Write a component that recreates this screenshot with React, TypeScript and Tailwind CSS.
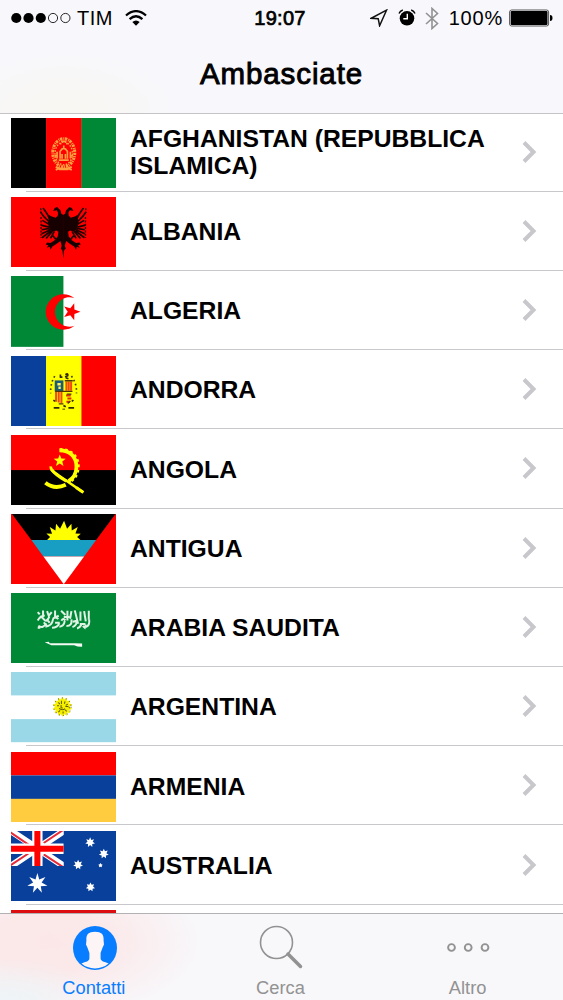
import React from "react";

// Points of a star polygon centred on cx, cy
const star = (cx: number, cy: number, r: number, inner: number, n: number, turn = -90) =>
  Array.from({ length: n * 2 }, (_, i) => {
    const a = ((turn + (i * 180) / n) * Math.PI) / 180;
    const d = i % 2 ? inner : r;
    return `${(cx + d * Math.cos(a)).toFixed(1)},${(cy + d * Math.sin(a)).toFixed(1)}`;
  }).join(" ");

type FlagProps = { children?: React.ReactNode };

const Flag = ({ children }: FlagProps) => (
  <svg
    viewBox="0 0 316 210"
    preserveAspectRatio="none"
    className="block h-[70.2px] w-[105.5px] shrink-0"
  >
    {children}
  </svg>
);

const Afghanistan = () => (
  <Flag>
    <rect width="106" height="210" fill="#000" />
    <rect x="105" width="107" height="210" fill="#fe0000" />
    <rect x="211" width="105" height="210" fill="#008837" />
    <g fill="none" stroke="#ffa040">
      <ellipse cx="158" cy="104" rx="33" ry="42" strokeWidth="9" strokeDasharray="7 3 3 2" />
      <ellipse cx="158" cy="106" rx="26" ry="34" strokeWidth="4" strokeDasharray="5 4" />
      <path d="M134 146q24 12 48 0M134 155l12-5M182 155l-12-5M144 153h28" strokeWidth="6" />
      <path d="M138 101v20M178 101v20M147 122v-22q11-18 22 0v22M158 90v-8M143 126h30M150 70h16M146 77h5M165 77h5" strokeWidth="5" />
      <path d="M153 108v14M163 108v14M130 113h8M178 113h8" strokeWidth="5" />
    </g>
  </Flag>
);

// Left half of the eagle, mirrored for the right one
const EagleHalf = () => (
  <>
    <path
      d="M157 54L151 50L148 40L138 30L131 33L126 42L137 40L141 47L140 56L134 62L122 58L111 52L113 66L110 76L113 88L117 98L124 104L136 100L142 104L140 118L130 130L118 138L108 136L104 142L112 144L107 152L116 149L118 158L124 148L138 139L148 132L152 146L149 154L154 160L157 184z"
      fill="#160000"
    />
    <path
      d="M96 33L108 50L116 66M88 44L98 58L114 74M94 70L114 82M90 84L114 90M92 98L116 94M92 110L118 98M93 122L120 101M105 124L124 102M118 124L130 103M122 112L134 126"
      fill="none"
      stroke="#1c0000"
      strokeWidth="5"
    />
    <path d="M89 34v14M90 60v62" stroke="#300000" strokeWidth="4" strokeDasharray="6 4" />
  </>
);

const Albania = () => (
  <Flag>
    <rect width="316" height="210" fill="#fe0000" />
    <EagleHalf />
    <g transform="translate(313 0) scale(-1 1)">
      <EagleHalf />
    </g>
  </Flag>
);

const Algeria = () => (
  <Flag>
    <rect width="316" height="210" fill="#fff" />
    <rect width="157" height="212" fill="#008837" />
    <path d="M190 66A53 53 0 1 0 190 149A44 44 0 1 1 190 66z" fill="#fe0000" />
    <polygon points={star(181, 107, 27, 11, 5, 0)} fill="#fe0000" />
  </Flag>
);

const Andorra = () => (
  <Flag>
    <rect width="106" height="210" fill="#08409c" />
    <rect x="105" width="107" height="210" fill="#ff0" />
    <rect x="211" width="105" height="210" fill="#fe0000" />
    <rect x="131" y="73" width="26" height="33" fill="#1b5b74" />
    <path d="M139 81h10v7h-10zM142 91h7v8h-7z" fill="#fff36b" />
    <path d="M135 107v30M143 107v32M151 107v34M166 76v28M173 76v28M180 76v28" stroke="#f04a10" strokeWidth="6" />
    <path d="M165 118h14M169 127h12M166 137h10" stroke="#e02c10" strokeWidth="6" />
    <path d="M132 106h52M161 74h24M167 114h14M170 142l8-7M143 143h14" stroke="#503400" strokeWidth="4" />
    <path d="M146 63h8M148 55v9M163 56q9-6 7 3l-8 4M164 65l8 3M127 132l5 4M187 132l-5 4M128 155h17M172 155h17M157 148l7 4" stroke="#302800" strokeWidth="5" fill="none" />
    <path d="M131 60q-14 24-12 52M181 60q17 24 15 52" stroke="#484000" strokeWidth="5" strokeDasharray="5 8" fill="none" />
    <path d="M154 159h8" stroke="#484000" strokeWidth="3" />
  </Flag>
);

const Angola = () => (
  <Flag>
    <rect width="316" height="210" fill="#fe0000" />
    <rect y="105" width="316" height="105" fill="#000" />
    <polygon points={star(146, 77, 19, 8, 5)} fill="#ff0" />
    <g fill="none" stroke="#ff0">
      <path d="M145 46C176 46 197 65 196 97C195 118 187 130 172 138" strokeWidth="11" />
      <path d="M146 43C180 40 206 66 202 99C200 121 190 133 177 140" strokeWidth="7" strokeDasharray="8 8" />
      <path d="M103 143C122 158 143 159 164 149" strokeWidth="12" />
      <path d="M119 94Q118 106 140 119L217 172" strokeWidth="8" />
      <path d="M121 103Q134 121 166 138M195 157l21 14" strokeWidth="9" />
    </g>
  </Flag>
);

const Antigua = () => (
  <Flag>
    <rect width="316" height="210" fill="#fe0000" />
    <path d="M3 0H313L255 78H61z" fill="#000" />
    <path d="M61 78H255L219 127H97z" fill="#189dc3" />
    <path d="M97 127H219L158 210z" fill="#fff" />
    <path
      d="M108 78l9-9-11-11 17 1-7-20 17 10 2-20 12 15 12-24 9 24 13-15 1 20 18-10-7 19 16 1-11 10 10 9z"
      fill="#ff0"
    />
  </Flag>
);

const SaudiArabia = () => (
  <Flag>
    <rect width="316" height="210" fill="#008837" />
    <g fill="none" stroke="#dff2e4" strokeWidth="6">
      <path d="M80 57l6 7M96 52v20M108 54l5 14 9-11M132 52v21l11-5M150 53l13 13M169 53v29M181 54l-4 23M191 52l10 40M208 55v28M219 54l5 31M233 53v27" />
      <path d="M80 82q9-17 18-4t17-8M82 98q15 10 23-8M103 101q20-3 22-19t17-4M116 89l-10-11M123 104q16 0 22-14M145 101q14-1 16-18M151 83q5-10 12-2M166 99q18 0 15-20M184 102q14-5 13-20M198 106q10-3 14-15M215 99l6 5 3-10M224 102q13-5 10-23M132 89h14M158 72h18M185 86l12-3M86 72l15-5M80 104h8M206 93h17M98 88l9 9" />
    </g>
    <path d="M101 147l12-1 3 4h75l22 1v10q-12 1-24-5h-68z" fill="#f3fbf4" />
  </Flag>
);

const Argentina = () => (
  <Flag>
    <rect width="316" height="210" fill="#9ad8e8" />
    <rect y="70" width="316" height="71" fill="#fff" />
    <polygon points={star(154, 104, 30, 22, 14)} fill="#f6f000" />
    <path d="M142 91l4 5M151 86v10M162 88l-2 7M170 96l-6 4M138 101h6M144 109q8 7 18 1M150 99v8l5 1M163 103h9M142 120l5-5M156 124v-6M167 118l-5-5M176 108l-3-2" stroke="#5e5a08" strokeWidth="3" fill="none" />
    <circle cx="154" cy="104" r="26" fill="none" stroke="#6d6920" strokeWidth="3" strokeDasharray="3 9" />
  </Flag>
);

const Armenia = () => (
  <Flag>
    <rect width="316" height="70" fill="#fe0000" />
    <rect y="70" width="316" height="71" fill="#08409c" />
    <rect y="140" width="316" height="70" fill="#ffcb3f" />
  </Flag>
);

const Australia = () => (
  <Flag>
    <rect width="316" height="210" fill="#08409c" />
    <svg width="158" height="105" viewBox="0 0 158 105">
      <path d="M0 0L158 105M158 0L0 105" stroke="#fff" strokeWidth="20" />
      <path d="M-2 4L60 46M98 70L156 108M156-3L98 36M60 62L-2 103" stroke="#e52a3a" strokeWidth="6" />
      <path d="M79 0V105M0 53H158" stroke="#fff" strokeWidth="31" />
      <path d="M79 0V105M0 53H158" stroke="#fe0000" strokeWidth="18" />
    </svg>
    <g fill="#fff">
      <polygon points={star(79, 157, 31, 13, 7)} />
      <polygon points={star(237, 34, 15, 8, 7)} />
      <polygon points={star(278, 68, 15, 8, 7)} />
      <polygon points={star(201, 101, 15, 8, 7)} />
      <polygon points={star(238, 168, 14, 8, 7)} />
      <polygon points={star(268, 103, 7, 4, 5)} />
    </g>
  </Flag>
);

const Austria = () => (
  <Flag>
    <rect width="316" height="70" fill="#dc0c10" />
    <rect y="70" width="316" height="70" fill="#fff" />
    <rect y="140" width="316" height="70" fill="#dc0c10" />
  </Flag>
);

type Country = { name: string; flag: React.ReactNode };

const countries: Country[] = [
  { name: "AFGHANISTAN (REPUBBLICA ISLAMICA)", flag: <Afghanistan /> },
  { name: "ALBANIA", flag: <Albania /> },
  { name: "ALGERIA", flag: <Algeria /> },
  { name: "ANDORRA", flag: <Andorra /> },
  { name: "ANGOLA", flag: <Angola /> },
  { name: "ANTIGUA", flag: <Antigua /> },
  { name: "ARABIA SAUDITA", flag: <SaudiArabia /> },
  { name: "ARGENTINA", flag: <Argentina /> },
  { name: "ARMENIA", flag: <Armenia /> },
  { name: "AUSTRALIA", flag: <Australia /> },
  { name: "", flag: <Austria /> },
];

const StatusBar = () => (
  <div className="grid h-9 grid-cols-[1fr_auto_1fr] items-center pr-[10px] pl-[11px] text-[20px] leading-9">
    <div className="flex items-center">
      <svg width="61" height="12" viewBox="0 0 61 12">
        <circle cx="5.3" cy="6" r="5.1" />
        <circle cx="17.5" cy="6" r="5.1" />
        <circle cx="29.8" cy="6" r="5.1" />
        <circle cx="42" cy="6" r="4.6" fill="none" stroke="#111" strokeWidth=".9" />
        <circle cx="54.4" cy="6" r="4.6" fill="none" stroke="#111" strokeWidth=".9" />
      </svg>
      <span className="ml-[5px] w-[48px] tracking-[0.5px]">TIM</span>
      <svg width="22" height="16" viewBox="0 0 22 16">
        <g fill="none" stroke="#000" strokeWidth="2.3">
          <path d="M1 5.5Q11-3.2 21 5.5" />
          <path d="M4.6 9.1Q11 3.4 17.4 9.1" />
        </g>
        <path d="M7.3 12Q11 8.8 14.7 12L11 15.8z" />
      </svg>
    </div>
    <span className="mr-[2px] -ml-[2px] tracking-[0.3px] [-webkit-text-stroke:0.7px_#000]">19:07</span>
    <div className="flex items-center justify-end">
      <svg width="18" height="18" viewBox="0 0 18 18" className="mr-[10px]">
        <path d="M16.5 1.2L1.2 9.3L8.2 9.7L9.6 16.7z" fill="none" stroke="#111" strokeWidth="1.5" />
      </svg>
      <svg width="18" height="18" viewBox="0 0 18 18" className="mr-[9px]">
        <circle cx="9" cy="9.3" r="7.3" />
        <path d="M1 4.6Q2 1.8 4.8 1M17 4.6Q16 1.8 13.2 1" fill="none" stroke="#000" strokeWidth="1.4" />
        <path d="M9.3 4.7V9.8H5.3" fill="none" stroke="#fff" strokeWidth="1.4" />
      </svg>
      <svg width="14" height="23" viewBox="0 0 14 23" className="mr-[10px]">
        <path d="M1 6L12.5 16.5L7 21.5V1.5L12.5 6.5L1 17" fill="none" stroke="#929295" strokeWidth="1.6" />
      </svg>
      <span className="mr-[6px] tracking-[0.8px]">100%</span>
      <svg width="44" height="18" viewBox="0 0 44 18">
        <rect x=".6" y="1" width="39" height="16" rx="2" fill="none" stroke="#555" />
        <rect x="1.7" y="2.1" width="36.8" height="13.8" rx="1" />
        <path d="M41 6q2.5 0 2.5 3T41 12z" />
      </svg>
    </div>
  </div>
);

const CountryRow = ({ name, flag }: Country) => (
  <li className="flex h-[79.22px] shrink-0 pl-[10.5px]">
    <div className="pt-[5.4px]">{flag}</div>
    <div className="-ml-[90px] flex flex-1 items-center border-b border-[#c8c7cc] pr-[26px] pl-[104px]">
      <span className="w-[370px] pt-[1.4px] text-[24.7px] leading-[27px] font-bold">{name}</span>
      <svg width="16" height="24" viewBox="0 0 16 24" className="ml-auto">
        <path d="M3 2.5L12.5 12L3 21.5" fill="none" stroke="#c7c7cc" strokeWidth="4" />
      </svg>
    </div>
  </li>
);

const TabBar = () => (
  <nav className="grid h-[87px] shrink-0 grid-cols-3 border-t border-[#b2b2b5] bg-[#f8f7fa] bg-[radial-gradient(90px_42px_at_10px_87px,#edf4f7_0,transparent_100%),radial-gradient(150px_75px_at_50px_28px,#fbe7e8_0,#fbe9ea_40%,transparent_100%)] text-[18.3px] leading-6 text-[#929292]">
    <div className="flex flex-col items-center pt-[11px] text-[#087dff]">
      <svg width="46" height="46" viewBox="0 0 46 46" className="ml-[2px]">
        <circle cx="23" cy="23" r="22" fill="#087dff" />
        <path
          d="M23 6.8C16.5 6.8 14 9.5 14.4 15.5L14 19.5L15.6 23L17.4 28V33.5C16.8 37 12.5 36.8 9.4 38.6Q15 43.4 23 43.4T36.6 38.6C33.5 36.8 29.2 37 28.6 33.5V28L30.4 23L32 19.5L31.6 15.5C32 9.5 29.5 6.8 23 6.8z"
          fill="#fdf4f5"
        />
      </svg>
      <span className="mt-[5px]">Contatti</span>
    </div>
    <div className="flex flex-col items-center pt-[11px]">
      <svg width="46" height="46" viewBox="0 0 46 46">
        <circle cx="18.5" cy="17.5" r="16" fill="none" stroke="#929292" strokeWidth="1.6" />
        <path d="M30 29L42.5 41.5" stroke="#929292" strokeWidth="3.5" strokeLinecap="round" />
      </svg>
      <span className="mt-[5px] mr-[2px]">Cerca</span>
    </div>
    <div className="flex flex-col items-center pt-[11px] pr-[3px]">
      <svg width="46" height="46" viewBox="0 0 46 46" fill="none" stroke="#929292" strokeWidth="1.9">
        <circle cx="6.5" cy="22.5" r="3.4" />
        <circle cx="23.2" cy="22.5" r="3.4" />
        <circle cx="40" cy="22.5" r="3.4" />
      </svg>
      <span className="mt-[5px]">Altro</span>
    </div>
  </nav>
);

const App = () => {
  return (
    <div className="flex h-[1000px] w-[563px] flex-col overflow-hidden bg-white font-['Liberation_Sans',Arial,sans-serif] text-black">
      {/* HEADER */}
      <header className="h-[113.5px] shrink-0 border-b border-[#c4c4c6] bg-[#f8f7fb] bg-[radial-gradient(110px_60px_at_65px_113px,#f8f7f0_0,transparent_100%)]">
        <StatusBar />
        <h1 className="mt-[18px] text-center text-[29.5px] leading-[40px] tracking-[0.9px] [-webkit-text-stroke:0.9px_#000]">
          Ambasciate
        </h1>
      </header>
      {/* COUNTRY LIST */}
      <ul className="-mt-px flex min-h-0 flex-1 flex-col overflow-hidden">
        {countries.map((item) => (
          <CountryRow key={item.name} name={item.name} flag={item.flag} />
        ))}
      </ul>
      <TabBar />
    </div>
  );
};

export default App;
